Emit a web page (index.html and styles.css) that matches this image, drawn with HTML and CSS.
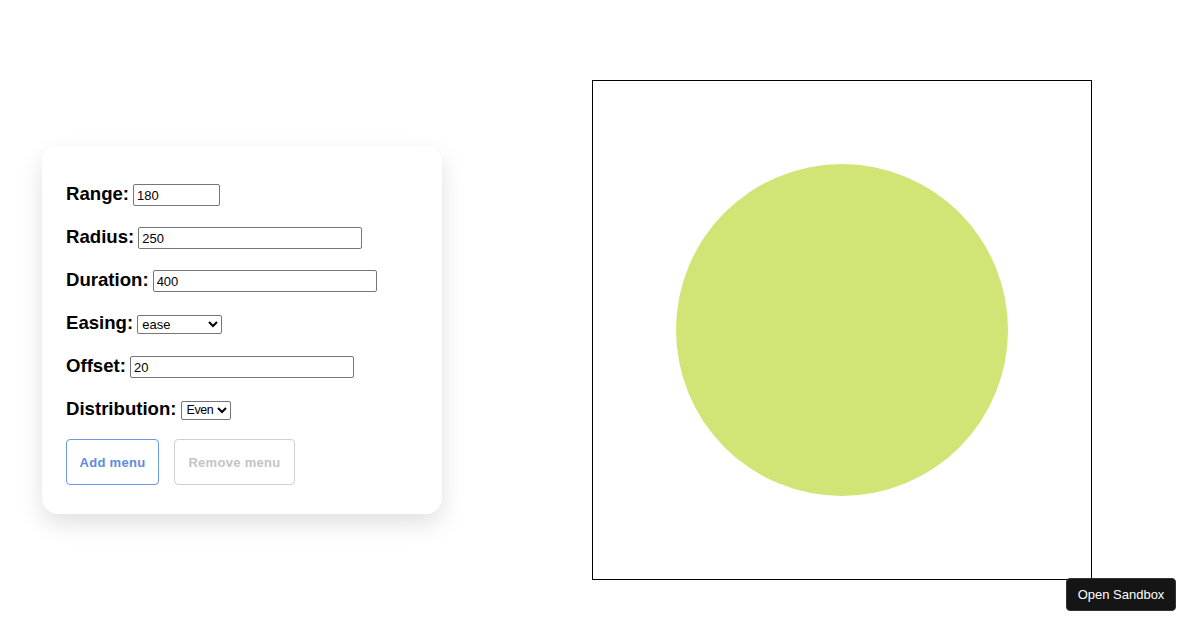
FILE: index.html
```html
<!DOCTYPE html>
<html>
<head>
<meta charset="utf-8">
<link rel="stylesheet" href="styles.css">
</head>
<body>
<div class="page">
  <div class="card">
    <div class="row"><label class="lbl">Range:</label><input class="inp inp-sm" type="text" value="180"></div>
    <div class="row"><label class="lbl">Radius:</label><input class="inp" type="text" value="250"></div>
    <div class="row"><label class="lbl">Duration:</label><input class="inp" type="text" value="400"></div>
    <div class="row"><label class="lbl">Easing:</label><select class="sel sel-ease"><option>ease</option></select></div>
    <div class="row"><label class="lbl">Offset:</label><input class="inp" type="text" value="20"></div>
    <div class="row"><label class="lbl">Distribution:</label><select class="sel sel-dist"><option>Even</option></select></div>
    <div class="buttons">
      <button class="btn btn-add">Add menu</button>
      <button class="btn btn-remove">Remove menu</button>
    </div>
  </div>
  <div class="stage">
    <div class="circle"></div>
  </div>
</div>
<a class="sandbox">Open Sandbox</a>
</body>
</html>
```
FILE: styles.css
```css
html, body {
  margin: 0;
  padding: 0;
  background: #fff;
  font-family: "Liberation Sans", Arial, sans-serif;
}
.page {
  display: flex;
  align-items: center;
  gap: 150px;
  padding: 80px 0 0 42px;
}
.card {
  width: 400px;
  box-sizing: border-box;
  padding: 26px 24px 29px 24px;
  background: #fff;
  border-radius: 16px;
  box-shadow: 0 10px 25px rgba(0, 0, 0, 0.12);
}
.row {
  display: flex;
  align-items: center;
  height: 43px;
  gap: 4px;
}
.lbl {
  font-weight: bold;
  font-size: 18.6px;
  color: #000;
}
.inp {
  width: 224px;
  height: 22px;
  box-sizing: border-box;
  border: 1px solid #767676;
  border-radius: 2px;
  padding: 1px 3px;
  font-family: "Liberation Sans", Arial, sans-serif;
  font-size: 13px;
  color: #000;
  margin-top: 3px;
}
.inp-sm {
  width: 87px;
}
.sel {
  height: 19px;
  box-sizing: border-box;
  border: 1px solid #767676;
  border-radius: 2px;
  font-family: "Liberation Sans", Arial, sans-serif;
  font-size: 13px;
  color: #000;
  background: #fff;
  margin-top: 3px;
}
.sel-ease {
  width: 85px;
}
.sel-dist {
  width: 50px;
  font-size: 12.5px;
  letter-spacing: -0.4px;
  padding: 0 0 0 1px;
}
.buttons {
  display: flex;
  gap: 15px;
  margin-top: 9px;
}
.btn {
  height: 46px;
  box-sizing: border-box;
  background: #fff;
  border-radius: 4px;
  font-family: "Liberation Sans", Arial, sans-serif;
  font-weight: bold;
  font-size: 13px;
  letter-spacing: 0.3px;
  padding: 0;
}
.btn-add {
  width: 93px;
  border: 1px solid #6a98e8;
  color: #5b8ce0;
}
.btn-remove {
  width: 121px;
  border: 1px solid #d0d0d0;
  color: #c4c4c4;
}
.stage {
  width: 500px;
  height: 500px;
  box-sizing: border-box;
  border: 1px solid #000;
  display: flex;
  align-items: center;
  justify-content: center;
}
.circle {
  width: 332px;
  height: 332px;
  border-radius: 50%;
  background: #d1e577;
}
.sandbox {
  position: fixed;
  right: 24px;
  bottom: 19px;
  width: 110px;
  height: 33px;
  box-sizing: border-box;
  background: #151515;
  color: #fff;
  border-radius: 4px;
  font-size: 13px;
  display: flex;
  align-items: center;
  justify-content: center;
  border: 1px solid #333;
}
```
